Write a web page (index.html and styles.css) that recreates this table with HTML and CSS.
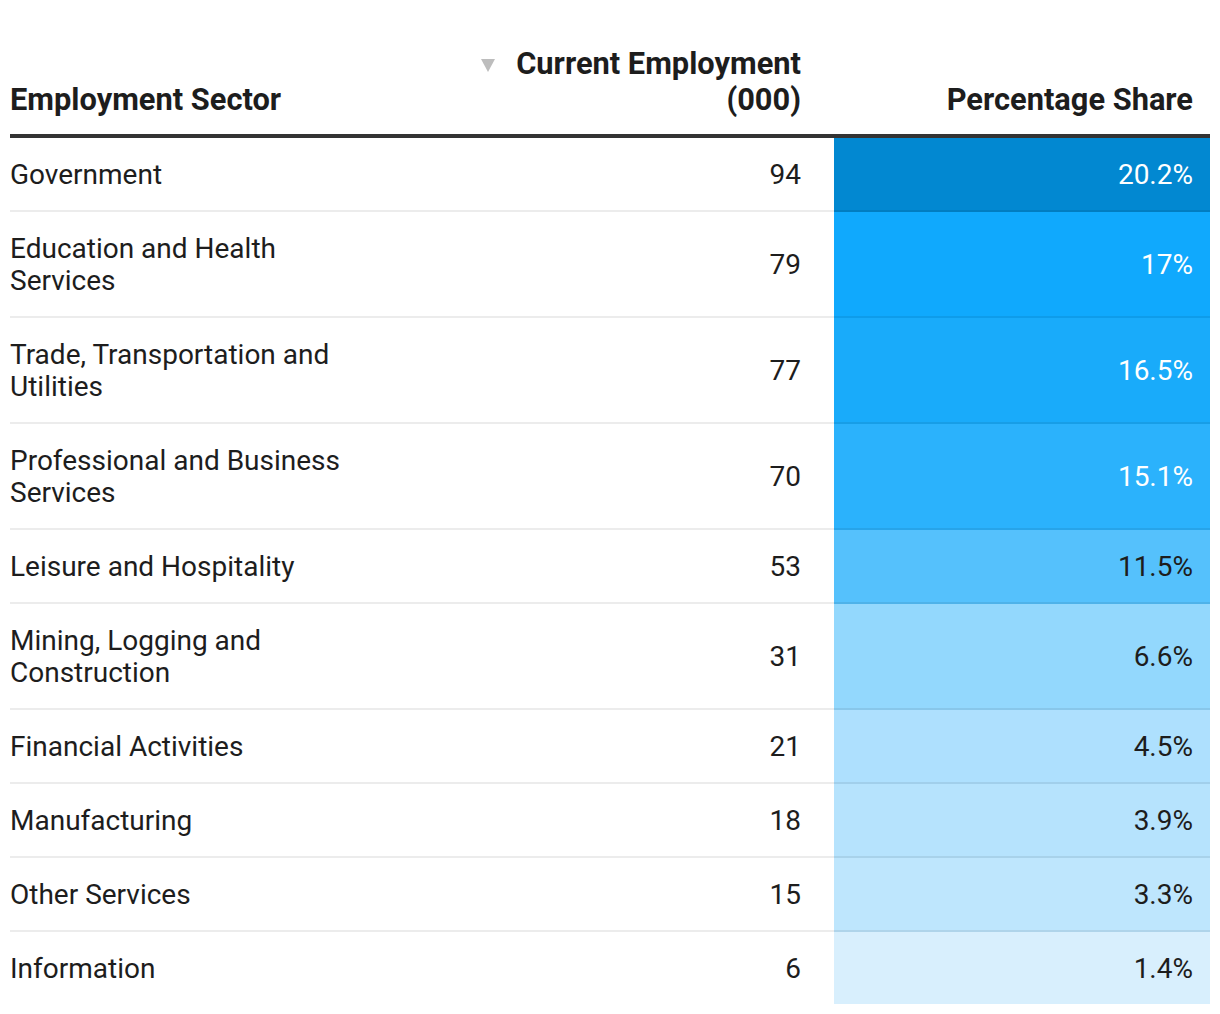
FILE: index.html
```html
<!DOCTYPE html>
<html lang="en">
<head>
<meta charset="utf-8">
<title>Employment by Sector</title>
<link rel="stylesheet" href="styles.css">
</head>
<body>
<table class="tbl">
  <thead>
    <tr>
      <th class="c-name">Employment Sector</th>
      <th class="c-num"><span class="sort"><svg width="14" height="13" viewBox="0 0 14 13"><polygon points="0,0 14,0 7,13" fill="#bdbdbd"/></svg></span>Current Employment<br>(000)</th>
      <th class="c-pct">Percentage Share</th>
    </tr>
  </thead>
  <tbody>
    <tr><td class="c-name">Government</td><td class="c-num">94</td><td class="c-pct s1 light">20.2%</td></tr>
    <tr><td class="c-name">Education and Health Services</td><td class="c-num">79</td><td class="c-pct s2 light">17%</td></tr>
    <tr><td class="c-name">Trade, Transportation and Utilities</td><td class="c-num">77</td><td class="c-pct s3 light">16.5%</td></tr>
    <tr><td class="c-name">Professional and Business Services</td><td class="c-num">70</td><td class="c-pct s4 light">15.1%</td></tr>
    <tr><td class="c-name">Leisure and Hospitality</td><td class="c-num">53</td><td class="c-pct s5">11.5%</td></tr>
    <tr><td class="c-name">Mining, Logging and Construction</td><td class="c-num">31</td><td class="c-pct s6">6.6%</td></tr>
    <tr><td class="c-name">Financial Activities</td><td class="c-num">21</td><td class="c-pct s7">4.5%</td></tr>
    <tr><td class="c-name">Manufacturing</td><td class="c-num">18</td><td class="c-pct s8">3.9%</td></tr>
    <tr><td class="c-name">Other Services</td><td class="c-num">15</td><td class="c-pct s9">3.3%</td></tr>
    <tr><td class="c-name">Information</td><td class="c-num">6</td><td class="c-pct s10">1.4%</td></tr>
  </tbody>
</table>
</body>
</html>
```
FILE: styles.css
```css
html, body {
  margin: 0;
  padding: 0;
  background: #ffffff;
}
body {
  font-family: Roboto, "Liberation Sans", Arial, sans-serif;
  color: #1d1d1d;
}
.tbl {
  margin: 46px 10px 0 10px;
  width: 1200px;
  border-collapse: separate;
  border-spacing: 0;
  table-layout: fixed;
}
.tbl th {
  font-size: 30.8px;
  font-weight: 700;
  line-height: 36px;
  vertical-align: bottom;
  padding: 0 0 16px 0;
  border-bottom: 4px solid #333333;
  color: #1d1d1d;
}
.tbl td {
  font-size: 28px;
  font-weight: 400;
  line-height: 32px;
  padding: 21px 0 19px 0;
  vertical-align: middle;
  border-bottom: 2px solid rgba(0, 0, 0, 0.075);
}
.tbl tbody tr:last-child td {
  border-bottom: none;
}
.c-name {
  width: 344px;
  text-align: left;
}
.tbl th.c-name, .tbl td.c-name {
  padding-left: 0;
  padding-right: 16px;
}
.tbl th.c-num, .tbl td.c-num {
  text-align: right;
  padding-right: 33px;
}
.tbl th.c-pct, .tbl td.c-pct {
  width: 359px;
  text-align: right;
  padding-right: 17px;
}
.sort {
  display: inline-block;
  margin-right: 21px;
  vertical-align: 2px;
}
.sort svg {
  display: block;
}
.light { color: #ffffff; }
.s1 { background: #0288d1; }
.s2 { background: #10a9fd; }
.s3 { background: #19abfa; }
.s4 { background: #2bb2fc; }
.s5 { background: #55c1fc; }
.s6 { background: #93d8fd; }
.s7 { background: #aee0fe; }
.s8 { background: #b6e3fd; }
.s9 { background: #bee6fd; }
.s10 { background: #d8effd; }
```
